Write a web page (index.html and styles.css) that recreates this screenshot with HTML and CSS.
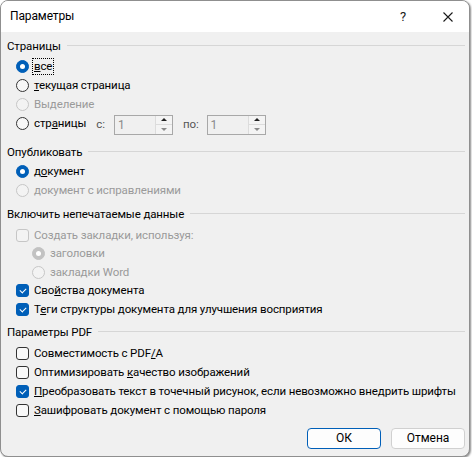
FILE: index.html
```html
<!DOCTYPE html>
<html lang="ru">
<head>
<meta charset="utf-8">
<title>Параметры</title>
<link rel="stylesheet" href="styles.css">
</head>
<body>
<div class="window">
  <div class="titlebar">
    <span class="title">Параметры</span>
    <span class="help">?</span>
    <span class="close"><svg width="10" height="10" viewBox="0 0 10 10"><path d="M0.5 0.5 L9.5 9.5 M9.5 0.5 L0.5 9.5" stroke="#1a1a1a" stroke-width="1.1" fill="none"/></svg></span>
  </div>
  <div class="content">
    <div class="group g1">
      <div class="legend"><span>Страницы</span><i></i></div>
      <div class="row"><span class="radio on"></span><span class="lbl focus"><u>в</u>се</span></div>
      <div class="row"><span class="radio"></span><span class="lbl"><u>т</u>екущая страница</span></div>
      <div class="row dis"><span class="radio"></span><span class="lbl">Выделение</span></div>
      <div class="row"><span class="radio"></span><span class="lbl">стр<u>а</u>ницы</span>
        <span class="spinlbl sfrom">с:</span>
        <span class="spin"><span class="val">1</span><span class="btns"><span class="up"></span><span class="dn"></span></span></span>
        <span class="spinlbl sto">по:</span>
        <span class="spin"><span class="val">1</span><span class="btns"><span class="up"></span><span class="dn"></span></span></span>
      </div>
    </div>
    <div class="group g2">
      <div class="legend"><span>Опубликовать</span><i></i></div>
      <div class="row"><span class="radio on"></span><span class="lbl">д<u>о</u>кумент</span></div>
      <div class="row dis"><span class="radio"></span><span class="lbl">документ с исправлениями</span></div>
    </div>
    <div class="group g3">
      <div class="legend"><span>Включить непечатаемые данные</span><i></i></div>
      <div class="row dis"><span class="check"></span><span class="lbl">Создать закладки, используя:</span></div>
      <div class="row dis sub"><span class="radio on"></span><span class="lbl">заголовки</span></div>
      <div class="row dis sub"><span class="radio"></span><span class="lbl">закладки Word</span></div>
      <div class="row"><span class="check on"></span><span class="lbl">Сво<u>й</u>ства документа</span></div>
      <div class="row"><span class="check on"></span><span class="lbl">Т<u>е</u>ги структуры документа для улучшения восприятия</span></div>
    </div>
    <div class="group g4">
      <div class="legend"><span>Параметры PDF</span><i></i></div>
      <div class="row"><span class="check"></span><span class="lbl">Совместимость с PDF<u>/</u>A</span></div>
      <div class="row"><span class="check"></span><span class="lbl">Оптимизировать <u>к</u>ачество изображений</span></div>
      <div class="row"><span class="check on"></span><span class="lbl"><u>П</u>реобразовать текст в точечный рисунок, если невозможно внедрить шрифты</span></div>
      <div class="row"><span class="check"></span><span class="lbl"><u>З</u>ашифровать документ с помощью пароля</span></div>
    </div>
    <div class="buttons">
      <button class="btn default">ОК</button>
      <button class="btn">Отмена</button>
    </div>
  </div>
</div>
</body>
</html>
```
FILE: styles.css
```css
html, body {
  margin: 0;
  padding: 0;
  background: #ffffff;
}
body {
  font-family: Roboto, "Noto Sans", sans-serif;
  font-size: 11.5px;
  letter-spacing: -0.12px;
  color: #000;
}
.window {
  width: 468px;
  height: 455px;
  border: 1px solid #8f8f8f;
  border-radius: 8px;
  background: #f0f0f0;
  box-shadow: 1px 1px 2px rgba(0,0,0,0.45);
  overflow: hidden;
}
.titlebar {
  height: 31px;
  background: #ffffff;
  display: flex;
  align-items: center;
  padding-left: 9px;
}
.title {
  flex: 1;
  color: #000;
  padding-bottom: 1px;
  font-size: 12px;
}
.help {
  width: 6px;
  margin-right: 37px;
  font-size: 13px;
  color: #1a1a1a;
}
.close {
  width: 10px;
  height: 10px;
  margin-right: 16px;
  display: flex;
}
.content {
  padding: 4px 4px 0 5px;
}
.legend {
  height: 19px;
  display: flex;
  align-items: center;
  margin-bottom: 2px;
  padding-left: 1px;
}
.legend i {
  flex: 1;
  height: 1px;
  background: #d6d6d6;
  margin-left: 6px;
  margin-top: -1px;
}
.row {
  height: 19px;
  display: flex;
  align-items: center;
  padding-left: 10px;
}
.row.sub { padding-left: 26px; }
.g2 { margin-top: 9px; }
.g2 .legend { margin-bottom: 1px; }
.g3 { margin-top: 4px; }
.g3 .legend { margin-bottom: 3px; }
.g3 .row { height: 18.5px; }
.g4 { margin-top: 4px; }
.lbl {
  margin-left: 3px;
  white-space: nowrap;
  line-height: 15px;
  padding: 0 1px;
  border: 1px solid transparent;
}
.lbl.focus { border: 1px dotted #000; }
.dis .lbl { color: #9a9a9a; }
.radio {
  width: 13px;
  height: 13px;
  box-sizing: border-box;
  border: 1px solid #333;
  border-radius: 50%;
  background: #f7f7f7;
  flex: none;
  position: relative;
}
.radio.on {
  background: #005fb8;
  border-color: #005fb8;
}
.radio.on::after {
  content: "";
  position: absolute;
  left: 3px; top: 3px;
  width: 5px; height: 5px;
  border-radius: 50%;
  background: #fff;
}
.dis .radio { border-color: #c6c6c6; background: #f3f3f3; }
.dis .radio.on { background: #c2c2c2; border-color: #c2c2c2; }
.check {
  width: 13px;
  height: 13px;
  box-sizing: border-box;
  border: 1px solid #333;
  border-radius: 3px;
  background: #f9f9f9;
  flex: none;
  position: relative;
}
.check.on {
  background: #005fb8;
  border-color: #005fb8;
}
.check.on::after {
  content: "";
  position: absolute;
  left: 3px; top: 3px;
  width: 5px; height: 3px;
  border-left: 1px solid #fff;
  border-bottom: 1px solid #fff;
  transform: rotate(-45deg);
}
.dis .check { border-color: #c6c6c6; background: #f3f3f3; }
.spinlbl { color: #555; }
.sfrom { margin-left: 8px; margin-right: 9px; }
.sto { margin-left: 10px; margin-right: 8px; }
.spin {
  width: 59px;
  height: 20px;
  box-sizing: border-box;
  border: 1px solid #a8a8a8;
  background: #f0f0f0;
  display: flex;
  margin-top: 2px;
}
.spin .val {
  flex: 1;
  color: #8a8a8a;
  padding-left: 3px;
  line-height: 18px;
  font-size: 12px;
}
.spin .btns {
  width: 16px;
  display: flex;
  flex-direction: column;
  border-left: 1px solid #dcdcdc;
}
.spin .up, .spin .dn {
  flex: 1;
  display: flex;
  align-items: center;
  justify-content: center;
  background: #f4f4f4;
}
.spin .up { border-bottom: 1px solid #dcdcdc; }
.spin .up::after {
  content: "";
  border-left: 3px solid transparent;
  border-right: 3px solid transparent;
  border-bottom: 3px solid #222;
}
.spin .dn::after {
  content: "";
  border-left: 3px solid transparent;
  border-right: 3px solid transparent;
  border-top: 3px solid #8a8a8a;
}
.buttons {
  display: flex;
  justify-content: flex-end;
  gap: 10px;
  margin-top: 8px;
  padding-right: 0;
}
.btn {
  width: 74px;
  height: 21px;
  font-family: Roboto, "Noto Sans", sans-serif;
  font-size: 12px;
  border: 1px solid #d0d0d0;
  border-radius: 4px;
  background: #fdfdfd;
  color: #000;
  padding: 0;
}
.btn.default {
  border-color: #005fb8;
  background: #fdfdfd;
}
```
